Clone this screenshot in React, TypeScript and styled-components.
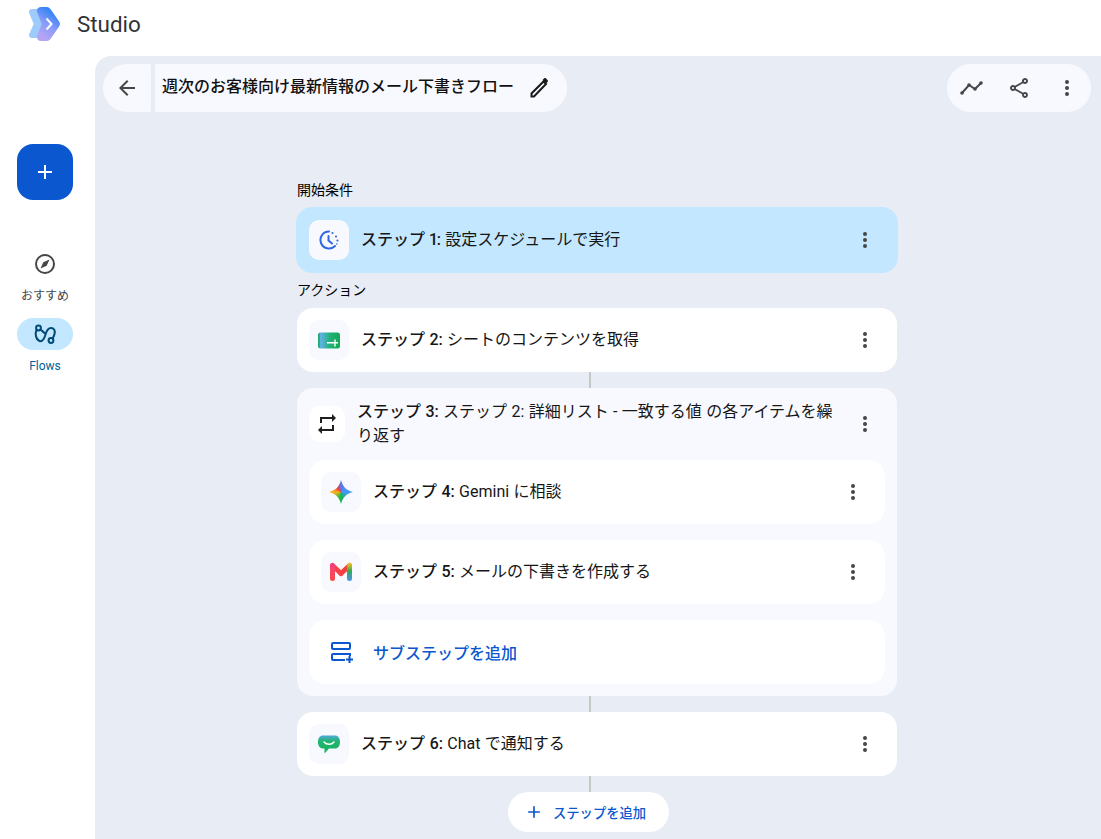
import React, { FC, ReactNode } from "react";
import styled, { createGlobalStyle } from "styled-components";

const FONT = `Roboto, "Noto Sans CJK JP", sans-serif`;

const GlobalStyle = createGlobalStyle`
    html, body {
        margin: 0;
        padding: 0;
        height: 100%;
        background: #fff;
        overflow: hidden;
        font-family: ${FONT};
        color: #1f1f1f;
    }
`;

const Page = styled.div`
    width: 1101px;
    height: 839px;
    display: flex;
    flex-direction: column;
    overflow: hidden;
`;

const Header = styled.header`
    height: 56px;
    flex: none;
    display: flex;
    align-items: center;
    padding: 0 0 8px 27px;
    box-sizing: border-box;
    gap: 14px;
`;

const Brand = styled.span`
    font-size: 22.4px;
    color: #303338;
`;

const Body = styled.div`
    flex: 1;
    display: flex;
    min-height: 0;
`;

const Sidebar = styled.nav`
    width: 95px;
    flex: none;
    padding: 88px 22px 0 17px;
    box-sizing: border-box;
    display: flex;
    flex-direction: column;
    align-items: center;
`;

const Fab = styled.button`
    width: 56px;
    height: 56px;
    border: 0;
    border-radius: 16px;
    background: #0b57d0;
    color: #fff;
    display: flex;
    align-items: center;
    justify-content: center;
    padding: 0;
    margin-bottom: 48px;
`;

const NavItem = styled.div<{ $active?: boolean }>`
    display: flex;
    flex-direction: column;
    align-items: center;
    gap: 8px;
    font-size: 12px;
    line-height: 16px;
    margin-bottom: 14px;
    color: ${(p) => (p.$active ? "#00639b" : "#444746")};
`;

const NavPill = styled.div<{ $active?: boolean }>`
    width: 56px;
    height: 32px;
    border-radius: 16px;
    display: flex;
    align-items: center;
    justify-content: center;
    background: ${(p) => (p.$active ? "#c2e7ff" : "transparent")};
    color: ${(p) => (p.$active ? "#004a77" : "#444746")};
`;

const Main = styled.main`
    flex: 1;
    background: #e8ecf5;
    border-top-left-radius: 16px;
    padding: 8px 10px 0 8px;
    min-width: 0;
    display: flex;
    flex-direction: column;
`;

const TopBar = styled.div`
    display: flex;
    justify-content: space-between;
    height: 48px;
    flex: none;
`;

const TitleGroup = styled.div`
    display: flex;
    gap: 4px;
`;

const BackButton = styled.button`
    width: 48px;
    height: 48px;
    border: 0;
    padding: 0;
    background: #f8f9fe;
    color: #444746;
    border-radius: 24px 2px 2px 24px;
    display: flex;
    align-items: center;
    justify-content: center;
`;

const TitleBox = styled.div`
    height: 48px;
    background: #f8f9fe;
    border-radius: 2px 24px 24px 2px;
    display: flex;
    align-items: center;
    padding: 0 16px 0 7px;
    gap: 13px;
    font-size: 16px;
    line-height: 22px;
    font-weight: 500;
    color: #111;
    white-space: nowrap;
`;

const TitleText = styled.span`
    margin-top: -2px;
`;

const ActionGroup = styled.div`
    height: 48px;
    background: #f8f9fe;
    border-radius: 24px;
    display: flex;
    align-items: center;
    color: #444746;
`;

const ActionButton = styled.span`
    width: 48px;
    height: 48px;
    display: flex;
    align-items: center;
    justify-content: center;
`;

const Canvas = styled.div`
    width: 600px;
    margin: 69px 0 0 194px;
    display: flex;
    flex-direction: column;
`;

const SectionLabel = styled.div<{ $first?: boolean }>`
    font-size: 14px;
    line-height: 18px;
    height: 18px;
    font-weight: 400;
    color: #000;
    margin-top: ${(p) => (p.$first ? "0" : "8px")};
    margin-bottom: ${(p) => (p.$first ? "8px" : "9px")};
`;

const Card = styled.div<{ $selected?: boolean }>`
    height: 64px;
    border-radius: 16px;
    display: flex;
    align-items: center;
    gap: 12px;
    padding: 0 12px;
    background: ${(p) => (p.$selected ? "#c2e7ff" : "#fff")};
    ${(p) => p.$selected && "padding: 1px 13px; margin: 0 -1px;"}
`;

const IconTile = styled.div<{ $plain?: boolean; $small?: boolean }>`
    width: ${(p) => (p.$small ? "36px" : "40px")};
    height: ${(p) => (p.$small ? "36px" : "40px")};
    flex: none;
    border-radius: 10px;
    background: ${(p) => (p.$plain ? "#fff" : "#f8f9fe")};
    display: flex;
    align-items: center;
    justify-content: center;
`;

const StepText = styled.div`
    flex: 1;
    font-size: 16px;
    line-height: 24px;
    color: #161616;
    word-spacing: 0.4px;
`;

const StepNo = styled.span`
    font-weight: 500;
    font-variant-numeric: proportional-nums;
`;

const MoreButton = styled.span`
    width: 40px;
    height: 40px;
    flex: none;
    display: flex;
    align-items: center;
    justify-content: center;
    color: #444746;
`;

const Connector = styled.div`
    width: 2px;
    height: 16px;
    background: #c4c7c5;
    align-self: center;
    margin-left: -14px;
    flex: none;
`;

const LoopCard = styled.div`
    background: #f8f9fe;
    border-radius: 16px;
    padding: 8px 12px 12px;
    display: flex;
    flex-direction: column;
    gap: 16px;
`;

const LoopHead = styled.div`
    display: flex;
    align-items: center;
    gap: 12px;
    height: 56px;
    margin-bottom: -8px;
`;

const AddSubLabel = styled.span`
    font-size: 16px;
    font-weight: 500;
    color: #0b57d0;
`;

const AddStepRow = styled.div`
    display: flex;
    justify-content: center;
    margin-left: -17px;
`;

const AddStepButton = styled.button`
    height: 40px;
    width: 161px;
    border: 0;
    border-radius: 20px;
    background: #fff;
    color: #0b57d0;
    font-family: ${FONT};
    font-size: 13.3px;
    font-weight: 500;
    display: flex;
    align-items: center;
    gap: 9px;
    padding: 0 0 0 16px;
`;

const SparkMark = styled.div`
    width: 24px;
    height: 24px;
    background: conic-gradient(
        #5f72e8 0deg,
        #3f9cf7 90deg,
        #14b558 180deg,
        #7fb83a 225deg,
        #fbb414 270deg,
        #f43f3a 315deg,
        #5f72e8 360deg
    );
    clip-path: path("M12 0c2 7 5 10 12 12-7 2-10 5-12 12-2-7-5-10-12-12 7-2 10-5 12-12z");
`;

const MoreIcon: FC = () => (
    <svg width="24" height="24" viewBox="0 0 24 24" fill="currentColor">
        <circle cx="12" cy="6" r="2" />
        <circle cx="12" cy="12" r="2" />
        <circle cx="12" cy="18" r="2" />
    </svg>
);

const PlusIcon: FC<{ size: number }> = ({ size }) => (
    <svg width={size} height={size} viewBox="0 0 24 24" fill="currentColor">
        <path d="M19 13h-6v6h-2v-6H5v-2h6V5h2v6h6v2z" />
    </svg>
);

const Logo: FC = () => (
    <svg width="36" height="36" viewBox="0 0 36 36">
        <defs>
            <linearGradient id="logoMain" gradientUnits="userSpaceOnUse" x1="12" y1="28" x2="26" y2="8">
                <stop offset="0" stopColor="#b4a4f6" />
                <stop offset="0.5" stopColor="#8a9cf8" />
                <stop offset="1" stopColor="#3b86f7" />
            </linearGradient>
        </defs>
        <path d="M5 6H9L17 18 9 29H5L10 18Z" fill="#9ccbfc" stroke="#9ccbfc" strokeWidth="6" strokeLinejoin="round" />
        <path d="M14 5H20L29 18 20 31H14L19 18Z" fill="url(#logoMain)" stroke="url(#logoMain)" strokeWidth="8" strokeLinejoin="round" />
        <path d="M19.500 12.500l5 5.500-5 5.500" fill="none" stroke="#fff" strokeWidth="2" />
    </svg>
);

const CompassIcon: FC = () => (
    <svg width="24" height="24" viewBox="0 0 24 24" fill="none" stroke="currentColor" strokeWidth="2">
        <circle cx="12" cy="12" r="9" />
        <path d="M16.500 7.500l-2.800 6.200-6.200 2.800 2.800-6.200z" fill="currentColor" stroke="none" />
    </svg>
);

const FlowsIcon: FC = () => (
    <svg width="24" height="24" viewBox="0 0 24 24" fill="none" stroke="currentColor" strokeWidth="2" strokeLinecap="round">
        <circle cx="5.500" cy="6" r="2.400" />
        <circle cx="18" cy="18.500" r="2.400" />
        <path d="M3.500 8c-1.500 3-1 9.500 3 11 3.500 1 5-3 6-6.500S15 6 18 6c3 0 4.500 2.500 3.500 6-.3 1.500-1 3-2 4.500" />
        <path d="M7.500 7.500c1 1 2.500 2 4 3.500" />
    </svg>
);

const ScheduleIcon: FC = () => (
    <svg width="24" height="24" viewBox="0 0 24 24" fill="none" stroke="#2f67e0" strokeWidth="2" strokeLinecap="round">
        <path d="M12 3.500a8.500 8.500 0 1 0 6 14.500" />
        <path d="M11.500 8v4.500l3.500 3" />
        <circle cx="15.500" cy="5" r="1.100" fill="#2f67e0" stroke="none" />
        <circle cx="19" cy="8.500" r="1.100" fill="#2f67e0" stroke="none" />
        <circle cx="20.500" cy="12.500" r="1.100" fill="#2f67e0" stroke="none" />
        <circle cx="19.800" cy="16" r=".8" fill="#2f67e0" stroke="none" />
    </svg>
);

const SheetIcon: FC = () => (
    <svg width="24" height="24" viewBox="0 0 24 24">
        <defs>
            <linearGradient id="sheetFill" x1="0" y1="0" x2="1" y2="0">
                <stop offset="0.05" stopColor="#1fa870" />
                <stop offset="0.12" stopColor="#62b2ea" />
                <stop offset="0.55" stopColor="#1fb273" />
                <stop offset="1" stopColor="#13a858" />
            </linearGradient>
        </defs>
        <rect x="1" y="4.500" width="22" height="16" rx="2.500" fill="url(#sheetFill)" />
        <path d="M10 14.700h11M18 11.500v7" stroke="#fff" strokeWidth="1.400" fill="none" />
    </svg>
);

const RepeatIcon: FC = () => (
    <svg width="24" height="24" viewBox="0 0 24 24" fill="#1f1f1f">
        <path d="M7 7h10v3l4-4-4-4v3H5v6h2V7zm10 10H7v-3l-4 4 4 4v-3h12v-6h-2v4z" />
    </svg>
);

const GmailIcon: FC = () => (
    <svg width="24" height="24" viewBox="0 0 24 24" fill="none">
        <defs>
            <linearGradient id="mailRight" gradientUnits="userSpaceOnUse" x1="20" y1="3" x2="20" y2="21">
                <stop offset="0" stopColor="#f9c51a" />
                <stop offset="0.45" stopColor="#34a853" />
                <stop offset="1" stopColor="#4a95f5" />
            </linearGradient>
            <linearGradient id="mailLeft" gradientUnits="userSpaceOnUse" x1="3" y1="3" x2="3" y2="21">
                <stop offset="0" stopColor="#f0437f" />
                <stop offset="1" stopColor="#fb4a45" />
            </linearGradient>
        </defs>
        <path d="M12 13.500L20.500 5.500" stroke="#f1413c" strokeWidth="5" strokeLinecap="round" />
        <path d="M3.500 5.500L12 13.500" stroke="#fb4147" strokeWidth="5" strokeLinecap="round" />
        <path d="M3.500 5.500V18.500" stroke="url(#mailLeft)" strokeWidth="5" strokeLinecap="round" />
        <path d="M20.500 5.500V18.500" stroke="url(#mailRight)" strokeWidth="5" strokeLinecap="round" />
    </svg>
);

const AddSubIcon: FC = () => (
    <svg width="24" height="24" viewBox="0 0 24 24" fill="none" stroke="#0b57d0" strokeWidth="2">
        <rect x="3" y="3" width="18" height="6" rx="1" />
        <path d="M16 20H4a1 1 0 0 1-1-1v-4a1 1 0 0 1 1-1h17v2" />
        <path d="M20.500 16v7M17 19.500h7" />
    </svg>
);

const ChatIcon: FC = () => (
    <svg width="24" height="24" viewBox="0 0 24 24">
        <defs>
            <linearGradient id="chatFill" x1="0" y1="0" x2="0" y2="1">
                <stop offset="0" stopColor="#4fa8dc" />
                <stop offset="0.3" stopColor="#22b573" />
                <stop offset="1" stopColor="#16ad5a" />
            </linearGradient>
        </defs>
        <path d="M6 3.500h12c3 0 5 2.500 5 6.500s-2 6.500-5 6.500h-6l-4.500 5v-5H6c-3 0-5-2.500-5-6.500s2-6.500 5-6.500z" fill="url(#chatFill)" />
        <path d="M7 10c2.500 3 7.500 3 10 0" stroke="#fff" strokeWidth="1.500" fill="none" strokeLinecap="round" />
    </svg>
);

const PencilIcon: FC = () => (
    <svg width="24" height="24" viewBox="0 0 24 24" fill="none" stroke="#1a1a1a" strokeWidth="2">
        <path d="M4.500 20.500v-3L16.500 5.500 19 8 7 20.500z" strokeLinejoin="miter" />
        <path d="M15.500 4l1.500-1.500c.6-.6 1.500-.6 2.100 0l1.400 1.400c.6.6.6 1.500 0 2.100L19 7.500z" fill="#1a1a1a" stroke="none" />
    </svg>
);

const TrendIcon: FC = () => (
    <svg width="24" height="24" viewBox="0 0 24 24" fill="none" stroke="currentColor" strokeWidth="2">
        <path d="M3 17l7-8 6 4 6-6" />
        <circle cx="3" cy="17" r="1.800" fill="currentColor" stroke="none" />
        <circle cx="10" cy="9" r="1.800" fill="currentColor" stroke="none" />
        <circle cx="16" cy="13" r="1.800" fill="currentColor" stroke="none" />
        <circle cx="22" cy="7" r="1.800" fill="currentColor" stroke="none" />
    </svg>
);

const ShareIcon: FC = () => (
    <svg width="24" height="24" viewBox="0 0 24 24" fill="currentColor">
        <path d="M18 16.080c-.760 0-1.440.300-1.960.770L8.910 12.700c.050-.230.090-.460.090-.700s-.040-.470-.090-.700l7.050-4.110c.540.500 1.250.810 2.040.810 1.660 0 3-1.340 3-3s-1.340-3-3-3-3 1.340-3 3c0 .240.040.470.090.700L8.040 9.810C7.500 9.310 6.790 9 6 9c-1.660 0-3 1.340-3 3s1.340 3 3 3c.790 0 1.500-.310 2.040-.810l7.120 4.160c-.050.210-.080.430-.080.650 0 1.610 1.310 2.920 2.920 2.920s2.920-1.310 2.920-2.920-1.310-2.920-2.920-2.920zM18 4c.550 0 1 .450 1 1s-.450 1-1 1-1-.450-1-1 .450-1 1-1zM6 13c-.550 0-1-.450-1-1s.450-1 1-1 1 .450 1 1-.450 1-1 1zm12 7.020c-.550 0-1-.450-1-1s.450-1 1-1 1 .450 1 1-.450 1-1 1z" />
    </svg>
);

type StepProps = {
    no: number;
    text: string;
    icon: ReactNode;
    selected?: boolean;
};

const Step: FC<StepProps> = ({ no, text, icon, selected }) => (
    <Card $selected={selected}>
        <IconTile>{icon}</IconTile>
        <StepText>
            <StepNo>ステップ {no}:</StepNo> {text}
        </StepText>
        <MoreButton>
            <MoreIcon />
        </MoreButton>
    </Card>
);

const App: FC = () => (
    <Page>
        <GlobalStyle />
        <Header>
            <Logo />
            <Brand>Studio</Brand>
        </Header>
        <Body>
            <Sidebar>
                <Fab>
                    <PlusIcon size={24} />
                </Fab>
                <NavItem>
                    <NavPill>
                        <CompassIcon />
                    </NavPill>
                    おすすめ
                </NavItem>
                <NavItem $active>
                    <NavPill $active>
                        <FlowsIcon />
                    </NavPill>
                    Flows
                </NavItem>
            </Sidebar>
            <Main>
                <TopBar>
                    <TitleGroup>
                        <BackButton>
                            <svg width="24" height="24" viewBox="0 0 24 24" fill="currentColor">
                                <path d="M20 11H7.830l5.590-5.590L12 4l-8 8 8 8 1.410-1.410L7.830 13H20v-2z" />
                            </svg>
                        </BackButton>
                        <TitleBox>
                            <TitleText>週次のお客様向け最新情報のメール下書きフロー</TitleText>
                            <PencilIcon />
                        </TitleBox>
                    </TitleGroup>
                    <ActionGroup>
                        <ActionButton>
                            <TrendIcon />
                        </ActionButton>
                        <ActionButton>
                            <ShareIcon />
                        </ActionButton>
                        <ActionButton>
                            <MoreIcon />
                        </ActionButton>
                    </ActionGroup>
                </TopBar>
                <Canvas>
                    <SectionLabel $first>開始条件</SectionLabel>
                    <Step selected no={1} text="設定スケジュールで実行" icon={<ScheduleIcon />} />
                    <SectionLabel>アクション</SectionLabel>
                    <Step no={2} text="シートのコンテンツを取得" icon={<SheetIcon />} />
                    <Connector />
                    <LoopCard>
                        <LoopHead>
                            <IconTile $plain $small>
                                <RepeatIcon />
                            </IconTile>
                            <StepText>
                                <StepNo>ステップ 3:</StepNo> ステップ 2: 詳細リスト - 一致する値 の各アイテムを繰り返す
                            </StepText>
                            <MoreButton>
                                <MoreIcon />
                            </MoreButton>
                        </LoopHead>
                        <Step no={4} text="Gemini に相談" icon={<SparkMark />} />
                        <Step no={5} text="メールの下書きを作成する" icon={<GmailIcon />} />
                        <Card>
                            <IconTile $plain>
                                <AddSubIcon />
                            </IconTile>
                            <AddSubLabel>サブステップを追加</AddSubLabel>
                        </Card>
                    </LoopCard>
                    <Connector />
                    <Step no={6} text="Chat で通知する" icon={<ChatIcon />} />
                    <Connector />
                    <AddStepRow>
                        <AddStepButton>
                            <PlusIcon size={20} />
                            ステップを追加
                        </AddStepButton>
                    </AddStepRow>
                </Canvas>
            </Main>
        </Body>
    </Page>
);

export default App;
